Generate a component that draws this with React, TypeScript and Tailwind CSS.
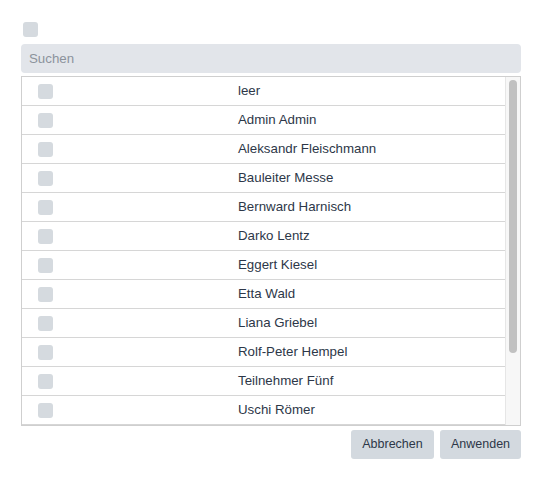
import React from "react";

const names = [
  "leer",
  "Admin Admin",
  "Aleksandr Fleischmann",
  "Bauleiter Messe",
  "Bernward Harnisch",
  "Darko Lentz",
  "Eggert Kiesel",
  "Etta Wald",
  "Liana Griebel",
  "Rolf-Peter Hempel",
  "Teilnehmer Fünf",
  "Uschi Römer",
];

export default function App() {
  return (
    <div
      className="w-[541px] h-[482px] bg-white pt-[22px] pl-[21px] pr-[20px] text-[13.3px] text-[#2d3748]"
      style={{ fontFamily: '"Liberation Sans", Arial, sans-serif' }}
    >
      <div className="ml-[2px] w-[15px] h-[15px] rounded-[3px] bg-[#d5dadf]" />
      <div className="mt-[7px] h-[29px] rounded-[4px] bg-[#e2e5ea] flex items-center pl-[8px] text-[#8c939c]">
        Suchen
      </div>
      <div className="mt-[3px] h-[350px] border border-[#cfcfcf] flex overflow-hidden">
        <div className="flex-1 flex flex-col">
          {names.map((n) => (
            <div
              key={n}
              className="h-[29px] shrink-0 border-b border-[#d6d6d6] flex items-center"
            >
              <div className="w-[216px] shrink-0 pl-[16px]">
                <div className="w-[15px] h-[15px] rounded-[3px] bg-[#d5dadf]" />
              </div>
              <span>{n}</span>
            </div>
          ))}
        </div>
        <div className="w-[15px] shrink-0 bg-[#f7f7f7] border-l border-[#e6e6e6] pt-[3px] flex justify-center">
          <div className="w-[8px] h-[273px] rounded-full bg-[#c1c1c1]" />
        </div>
      </div>
      <div className="mt-[4px] flex justify-end gap-[6px]">
        <button className="h-[29px] w-[83px] rounded-[3px] bg-[#d3d9df] text-[12.5px] text-[#2d3748]">
          Abbrechen
        </button>
        <button className="h-[29px] w-[81px] rounded-[3px] bg-[#d3d9df] text-[12.5px] text-[#2d3748]">
          Anwenden
        </button>
      </div>
    </div>
  );
}
